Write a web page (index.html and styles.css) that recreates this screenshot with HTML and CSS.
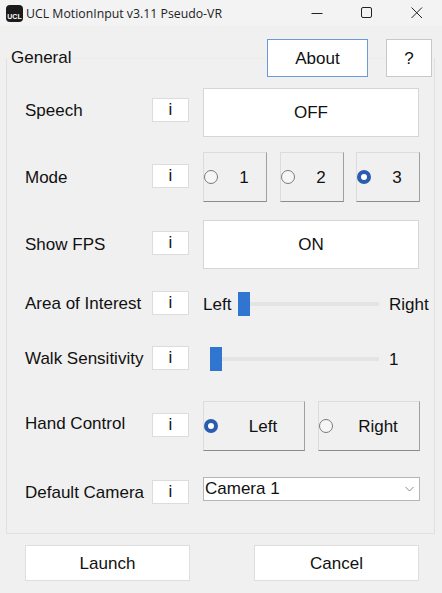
FILE: index.html
```html
<!DOCTYPE html>
<html lang="en">
<head>
    <meta charset="UTF-8">
    <meta name="viewport" content="width=device-width, initial-scale=1.0">
    <title>UCL MotionInput v3.11 Pseudo-VR</title>
    <link rel="stylesheet" href="styles.css">
</head>
<body>

    <div class="window">
        <div class="titlebar">
            <div class="logo"><span>UCL</span></div>
            <div class="title">UCL MotionInput v3.11 Pseudo-VR</div>
            <div class="win-controls">
                <svg width="12" height="12" viewBox="0 0 12 12"><path d="M0.5 6.5H11.5" stroke="#222" fill="none"/></svg>
                <svg width="12" height="12" viewBox="0 0 12 12"><rect x="0.5" y="0.5" width="10" height="10" rx="1.5" stroke="#222" fill="none"/></svg>
                <svg width="12" height="12" viewBox="0 0 12 12"><path d="M0.5 0.5L11 11M11 0.5L0.5 11" stroke="#222" fill="none"/></svg>
            </div>
        </div>

        <div class="group">
            <div class="group-head">
                <span class="legend">General</span>
                <button class="btn about">About</button>
                <button class="btn help">?</button>
            </div>

            <div class="row row-speech">
                <span class="label">Speech</span>
                <button class="info">i</button>
                <button class="btn toggle">OFF</button>
            </div>

            <div class="row row-mode">
                <span class="label">Mode</span>
                <button class="info">i</button>
                <div class="radios">
                    <div class="radio"><span class="dot"></span><span class="radio-text">1</span></div>
                    <div class="radio"><span class="dot"></span><span class="radio-text">2</span></div>
                    <div class="radio"><span class="dot checked"></span><span class="radio-text">3</span></div>
                </div>
            </div>

            <div class="row row-fps">
                <span class="label">Show FPS</span>
                <button class="info">i</button>
                <button class="btn toggle">ON</button>
            </div>

            <div class="row row-area">
                <span class="label">Area of Interest</span>
                <button class="info">i</button>
                <div class="slider-wrap">
                    <span class="side-left">Left</span>
                    <div class="slider slider-area"><span class="handle"></span></div>
                    <span class="side-right">Right</span>
                </div>
            </div>

            <div class="row row-walk">
                <span class="label">Walk Sensitivity</span>
                <button class="info">i</button>
                <div class="slider-wrap">
                    <div class="slider slider-walk"><span class="handle"></span></div>
                    <span class="side-right">1</span>
                </div>
            </div>

            <div class="row row-hand">
                <span class="label">Hand Control</span>
                <button class="info">i</button>
                <div class="radios hand">
                    <div class="radio"><span class="dot checked"></span><span class="radio-text">Left</span></div>
                    <div class="radio"><span class="dot"></span><span class="radio-text">Right</span></div>
                </div>
            </div>

            <div class="row row-camera">
                <span class="label">Default Camera</span>
                <button class="info">i</button>
                <div class="combo">
                    <span>Camera 1</span>
                    <svg width="9" height="6" viewBox="0 0 9 6"><path d="M0.5 1L4.5 5L8.5 1" stroke="#8a8a8a" fill="none"/></svg>
                </div>
            </div>
        </div>

        <div class="footer">
            <button class="btn footer-btn">Launch</button>
            <button class="btn footer-btn">Cancel</button>
        </div>
    </div>

</body>
</html>
```

FILE: styles.css
```css
html, body {
    margin: 0;
    height: 100%;
    overflow: hidden;
}
body {
    font-family: "Liberation Sans", Arial, sans-serif;
    font-size: 17px;
    color: #111;
    background: #f0f0f0;
}
button {
    font-family: inherit;
    font-size: inherit;
    color: inherit;
    padding: 0;
}
.window {
    height: 593px;
}

/* title bar */
.titlebar {
    display: flex;
    align-items: center;
    height: 26px;
    padding-left: 6px;
    background: #f3f3f3;
}
.logo {
    display: flex;
    align-items: flex-end;
    justify-content: center;
    width: 17px;
    height: 17px;
    background: #1b1b1b;
    border-radius: 4px;
}
.logo span {
    font-size: 7px;
    font-weight: bold;
    line-height: 10px;
    color: #fff;
}
.title {
    margin-left: 3px;
    font-family: "Open Sans", sans-serif;
    font-size: 12.3px;
    color: #222;
}
.win-controls {
    display: flex;
    gap: 38px;
    margin-left: auto;
    margin-right: 19px;
}

/* group box */
.group {
    height: 476px;
    margin: 32px 7px 0 6px;
    box-sizing: border-box;
    border: 1px solid #e0e0e0;
    border-top-color: #ececec;
}
.group-head {
    display: flex;
    align-items: center;
    height: 38px;
    margin: -20px 2px 0 4px;
}
.btn {
    background: #fff;
    border: 1px solid #d6d6d6;
    box-sizing: border-box;
    padding-top: 2px;
}
.about {
    width: 101px;
    height: 38px;
    margin-left: auto;
    border-color: #6a9ad8;
}
.help {
    width: 46px;
    height: 38px;
    margin-left: 18px;
    border-color: #c8c8c8;
}

/* rows */
.row {
    display: flex;
    align-items: flex-start;
    padding-left: 18px;
}
.label {
    width: 127px;
    height: 24px;
    line-height: 26px;
    white-space: nowrap;
}
.info {
    width: 37px;
    height: 24px;
    margin-right: 14px;
    background: #fff;
    border: 1px solid #dcdcdc;
    box-sizing: border-box;
    flex-shrink: 0;
}
.toggle {
    width: 216px;
    height: 49px;
    padding-top: 0;
}
.row-speech { margin-top: 11px; }
.row-speech .label { margin-top: 10px; }
.row-speech .info { margin-top: 10px; }
.row-mode { margin-top: 15px; }
.row-mode .label { margin-top: 13px; }
.row-mode .info { margin-top: 12px; }
.row-mode .radio:last-child { margin-left: -1px; }
.row-fps { margin-top: 18px; }
.row-fps .label { margin-top: 12px; }
.row-fps .info { margin-top: 11px; }
.row-area { margin-top: 22px; }
.row-walk { margin-top: 30px; }
.row-hand { margin-top: 30px; }
.row-hand .label { margin-top: 10px; }
.row-hand .info { margin-top: 12px; }
.row-camera { margin-top: 26px; }
.row-camera .label { margin-top: 3px; }
.row-camera .info { margin-top: 3px; }

/* radio buttons */
.radios {
    display: flex;
    gap: 13px;
}
.radio {
    display: flex;
    align-items: center;
    width: 64px;
    height: 50px;
    box-sizing: border-box;
    background: #f0f0f0;
    border: 1px solid #dcdcdc;
    border-right-color: #a0a0a0;
    border-bottom-color: #8c8c8c;
}
.dot {
    width: 14px;
    height: 14px;
    box-sizing: border-box;
    border: 1px solid #7a7a7a;
    border-radius: 50%;
    background: #f6f6f6;
    flex-shrink: 0;
}
.dot.checked {
    border: 4px solid #2a5db0;
    background: #fff;
}
.radio-text {
    flex: 1;
    text-align: center;
    padding: 2px 0 0 4px;
}
.hand .radio {
    width: 102px;
}

/* sliders */
.slider-wrap {
    display: flex;
    align-items: center;
    width: 230px;
    height: 25px;
}
.slider {
    position: relative;
    height: 4px;
    background: #e3e5e5;
}
.handle {
    position: absolute;
    left: 0;
    top: -10px;
    width: 12px;
    height: 24px;
    background: #3075d0;
}
.slider-area {
    width: 141px;
    margin-left: 3px;
}
.slider-walk {
    width: 169px;
    margin-left: 7px;
}
.side-left {
    width: 32px;
    padding-top: 2px;
}
.side-right {
    margin-left: 10px;
    padding-top: 2px;
}

/* combo box */
.combo {
    display: flex;
    align-items: center;
    justify-content: space-between;
    width: 217px;
    height: 24px;
    box-sizing: border-box;
    padding: 0 5px 0 1px;
    background: #fff;
    border: 1px solid #b5b5b5;
}

/* footer */
.footer {
    display: flex;
    justify-content: space-between;
    margin: 11px 23px 0 25px;
}
.footer-btn {
    width: 165px;
    height: 36px;
    border-color: #dedede;
}
```
